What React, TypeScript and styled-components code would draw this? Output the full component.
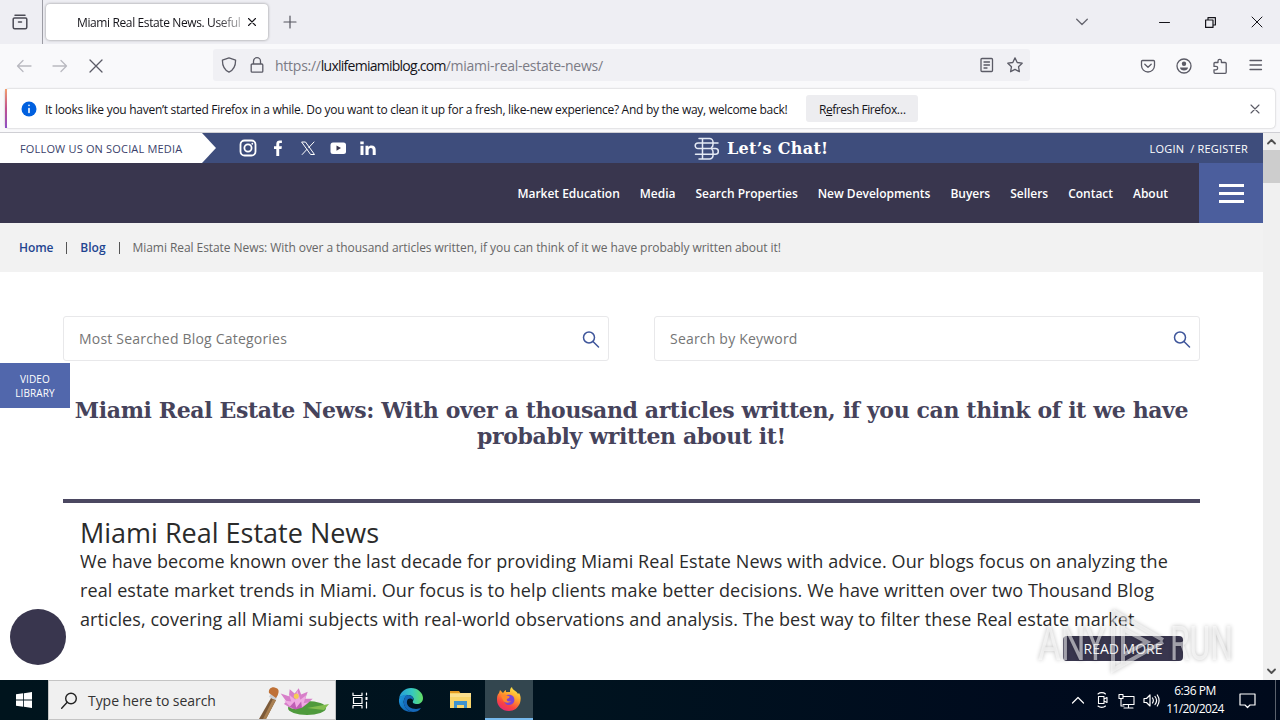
import type { ReactNode } from 'react';
import styled, { createGlobalStyle } from 'styled-components';

const GlobalStyle = createGlobalStyle`
  * {
    box-sizing: border-box;
  }

  body {
    margin: 0;
    width: 1280px;
    height: 720px;
    overflow: hidden;
    background: #fff;
    font-family: 'Open Sans', 'Noto Sans', sans-serif;
  }

  h1, h2, p {
    margin: 0;
  }

  svg {
    display: block;
    flex: none;
  }
`;

const Desktop = styled.div`
  display: flex;
  flex-direction: column;
  width: 1280px;
  height: 720px;
  overflow: hidden;
`;

const Label = styled.span<{ $size?: number; $spacing?: number; $color?: string; $weight?: number }>`
  font-size: ${({ $size }) => $size ?? 12}px;
  letter-spacing: ${({ $spacing }) => $spacing ?? 0}px;
  color: ${({ $color }) => $color ?? 'inherit'};
  font-weight: ${({ $weight }) => $weight ?? 400};
  white-space: nowrap;
`;

/* ---------- browser chrome ---------- */

const TabBar = styled.div`
  display: flex;
  align-items: center;
  height: 44px;
  flex: none;
  background: #eeeef3;
  color: #15141a;
`;

const ViewButton = styled.div`
  display: flex;
  align-items: center;
  justify-content: center;
  width: 43px;
  height: 44px;
  padding-right: 3px;
  border-right: 1px solid #9c9ca4;
`;

const Tab = styled.div`
  display: flex;
  align-items: center;
  width: 222px;
  height: 36px;
  margin-left: 3px;
  padding-left: 31px;
  border-radius: 4px;
  background: #fff;
  box-shadow: 0 0 3px rgba(0, 0, 0, 0.4);
`;

const TabTitle = styled.div`
  width: 164px;
  margin-right: 7px;
  overflow: hidden;
  line-height: 18px;
  mask-image: linear-gradient(to right, #000 84%, transparent 108%);
`;

const NewTab = styled.div`
  margin: 0 779px 0 15px;
`;

const WindowControls = styled.div`
  display: flex;
  align-items: center;
  gap: 35px;
  margin-left: 71px;
`;

const Toolbar = styled.div`
  display: flex;
  align-items: center;
  height: 43px;
  flex: none;
  padding: 0 16px;
  background: #f9f9fb;
  color: #5b5b66;
`;

const NavButtons = styled.div`
  display: flex;
  gap: 20px;
  width: 197px;
`;

const UrlBar = styled.div`
  display: flex;
  align-items: center;
  width: 817px;
  height: 32px;
  margin-top: -2px;
  padding: 0 7px 0 8px;
  gap: 12px;
  border-radius: 3px;
  background: #f0f0f4;
`;

const Url = styled.div`
  flex: 1;
  margin-left: -2px;
  color: #7b7b85;
`;

const ToolbarActions = styled.div`
  display: flex;
  gap: 20px;
  margin-left: auto;
`;

const NoticeArea = styled.div`
  height: 46px;
  flex: none;
  padding: 2px 5px 4px 5px;
  border-bottom: 1px solid #cfcfd4;
  background: #f9f9fb;
`;

const Notice = styled.div`
  display: flex;
  align-items: center;
  height: 39px;
  padding: 0 15px 0 14px;
  border-radius: 4px;
  border-left: 2px solid;
  border-image: linear-gradient(#f5a36b, #c0508f, #8a50c8) 1;
  background: #fff;
  box-shadow: 0 0 2px rgba(0, 0, 0, 0.3);
  color: #15141a;
`;

const NoticeText = styled.p`
  margin-left: 8px;
  line-height: 18px;
`;

const NoticeButton = styled.button`
  width: 112px;
  height: 27px;
  margin: 0 auto 0 19px;
  padding: 0;
  border: 0;
  border-radius: 3px;
  background: #ededf0;
  font-family: inherit;
  color: #15141a;
`;

/* ---------- site ---------- */

const Viewport = styled.div`
  display: flex;
  height: 547px;
  flex: none;
`;

const Page = styled.main`
  position: relative;
  width: 1263px;
  height: 547px;
  overflow: hidden;
  background: #fff;
`;

const TopBar = styled.div`
  display: flex;
  align-items: center;
  height: 30px;
  background: #3e4d7c;
  color: #fff;
`;

const FollowUs = styled.div`
  display: flex;
  align-items: center;
  width: 216px;
  height: 30px;
  padding-left: 20px;
  background: #fff;
  clip-path: polygon(0 0, 202px 0, 100% 50%, 202px 100%, 0 100%);
`;

const Socials = styled.div`
  display: flex;
  align-items: center;
  gap: 12px;
  margin-left: 22.5px;
`;

const Chat = styled.div`
  display: flex;
  align-items: center;
  gap: 8px;
  margin-left: 317.5px;
  font-family: 'DejaVu Serif', serif;
`;

const Account = styled.div`
  display: flex;
  gap: 6px;
  margin: 0 15px 0 auto;
`;

const Header = styled.header`
  display: flex;
  align-items: center;
  justify-content: flex-end;
  height: 60px;
  background: #39364e;
  color: #fff;
`;

const Nav = styled.nav`
  display: flex;
  gap: 20px;
  margin-right: 31px;
`;

const MenuButton = styled.div`
  display: flex;
  flex-direction: column;
  justify-content: center;
  align-items: center;
  gap: 5px;
  width: 64px;
  height: 60px;
  background: #4b5e9d;
`;

const MenuLine = styled.i`
  width: 25px;
  height: 3px;
  background: #fff;
`;

const Breadcrumb = styled.div`
  display: flex;
  align-items: center;
  height: 49px;
  padding-left: 19px;
  background: #f2f2f2;
  color: #666;
`;

const Separator = styled.i`
  width: 1px;
  height: 12px;
  margin: 0 13px;
  background: #555;
`;

const Content = styled.section`
  padding: 44px 63px 0;
`;

const Fields = styled.div`
  display: flex;
  gap: 45px;
`;

const Field = styled.div`
  display: flex;
  align-items: center;
  justify-content: space-between;
  width: 546px;
  height: 45px;
  padding: 0 8px 0 15px;
  border: 1px solid #e8e8ea;
  border-radius: 3px;
  color: #757575;
`;

const PageTitle = styled.h1`
  margin-top: 36px;
  height: 52px;
  font-family: 'DejaVu Serif', serif;
  font-size: 22px;
  font-weight: 700;
  line-height: 26px;
  letter-spacing: -0.38px;
  text-align: center;
  white-space: nowrap;
  color: #46435b;
`;

const Article = styled.article`
  margin-top: 50px;
  padding: 16px 17px 0;
  border-top: 4px solid #4b4861;
  color: #2b2b2b;
`;

const ArticleTitle = styled.h2`
  font-size: 27px;
  font-weight: 400;
  line-height: 28px;
`;

const Line = styled.span`
  display: block;
  font-size: 18px;
  line-height: 29px;
  letter-spacing: 0.09px;
  white-space: nowrap;
`;

const ReadMore = styled.button`
  display: block;
  width: 120px;
  height: 25px;
  margin: 2px 0 0 auto;
  padding: 0;
  border: 0;
  border-radius: 4px;
  background: #39364e;
  font-family: inherit;
  line-height: 25px;
  color: #fff;
`;

const VideoTag = styled.div`
  position: absolute;
  left: 0;
  top: 230px;
  width: 70px;
  height: 45px;
  padding-top: 9px;
  background: #5167ac;
  font-size: 10px;
  font-weight: 500;
  line-height: 14px;
  letter-spacing: 0.1px;
  text-align: center;
  color: #fff;
`;

const ChatBubble = styled.div`
  position: absolute;
  left: 10px;
  top: 476px;
  width: 56px;
  height: 56px;
  border-radius: 50%;
  background: #39364e;
`;

const Watermark = styled.svg`
  position: absolute;
  left: 1030px;
  top: 470px;
  filter: drop-shadow(0 0 2px rgba(0, 0, 0, 0.45));
`;

const Scrollbar = styled.div`
  display: flex;
  flex-direction: column;
  justify-content: space-between;
  align-items: center;
  width: 17px;
  padding: 5px 0;
  background: linear-gradient(#f0f0f0 17px, #cdcdcd 17px, #cdcdcd 50px, #f0f0f0 50px);
`;

/* ---------- taskbar ---------- */

const Taskbar = styled.div`
  display: flex;
  height: 40px;
  flex: none;
  background: linear-gradient(to right, #00141d, #00131f 45%, #000b1e 80%, #000a1c);
  color: #fff;
`;

const TaskItem = styled.div<{ $width: number; $active?: boolean }>`
  display: flex;
  align-items: center;
  justify-content: center;
  width: ${({ $width }) => $width}px;
  height: 40px;
  background: ${({ $active }) => ($active ? '#33464f' : 'transparent')};
  border-bottom: ${({ $active }) => ($active ? '2px solid #76b9ed' : '0')};
`;

const SearchBox = styled.div`
  display: flex;
  align-items: center;
  width: 288px;
  height: 40px;
  padding: 0 4px 0 12px;
  border: 1px solid #c4c4c4;
  background: #f0f0f0;
  color: #333;
  overflow: hidden;
`;

const SearchHint = styled.div`
  flex: 1;
  margin-left: 10px;
`;

const Tray = styled.div`
  display: flex;
  align-items: center;
  margin-left: auto;
  gap: 7.5px;
`;

const Clock = styled.div`
  display: flex;
  flex-direction: column;
  align-items: center;
  width: 62px;
  margin: 0 5px 0 -3px;
  line-height: 18px;
`;

const Peek = styled.i`
  width: 1px;
  height: 40px;
  margin: 0 4px 0 12px;
  background: #5b626d;
`;

type IconProps = { w?: number; h?: number; box?: string; stroke?: number; color?: string; children: ReactNode };

const Icon = ({ w = 16, h = w, box = `0 0 ${w} ${h}`, stroke = 1.3, color = 'currentColor', children }: IconProps) => (
  <svg
    width={w}
    height={h}
    viewBox={box}
    fill="none"
    stroke={color}
    strokeWidth={stroke}
    strokeLinecap="round"
    strokeLinejoin="round"
  >
    {children}
  </svg>
);

const Magnifier = () => (
  <Icon w={18} stroke={1.5} color="#3f569b">
    <circle cx="7" cy="7.500" r="5.500" />
    <path d="M11 11.500 16.500 17" />
  </Icon>
);

const Lotus = () => (
  <svg width="74" height="38" viewBox="0 0 74 38">
    <path d="M2 38 14 17l5 2L9 38z" fill="#7c5a39" />
    <path d="M6 38 16 18l3 1L9 38z" fill="#a98052" />
    <path d="m12 16 3-6 6 2-2 7z" fill="#c9ced3" />
    <path d="M12 12c-1-5 4-7 7-5 4 1 3 6 0 10z" fill="#bf7136" />
    <ellipse cx="50" cy="27" rx="19" ry="7" fill="#4f9a3c" />
    <path d="M50 27 72 23l-5 6z" fill="#83bd50" />
    <g transform="translate(4 2) scale(.82 .88)">
      <path d="M24 12l10 3 1-8 6 5 5-6 3 7 8-3-3 8 9 0-7 6-6 4-13 1-9-5 3-3z" fill="#d77fc9" />
      <path d="M28 20l9 1-3-8 8 6 2-11 4 11 7-5-3 9 6-1-9 6-11 1z" fill="#efabe2" />
      <path d="M35 27l6-6 2 7 6-7 1 7-8 2z" fill="#c15eb5" />
      <circle cx="43" cy="15" r="3" fill="#f5cc54" />
    </g>
  </svg>
);

const Edge = () => (
  <svg width="26" height="26" viewBox="0 0 26 26">
    <defs>
      <linearGradient id="edgeTop" x1="0" x2="1">
        <stop offset="0" stopColor="#269bd8" />
        <stop offset=".55" stopColor="#36c8c0" />
        <stop offset="1" stopColor="#63df62" />
      </linearGradient>
      <linearGradient id="edgeBody" x1="0" x2="1" y2="1">
        <stop offset="0" stopColor="#1e9be0" />
        <stop offset="1" stopColor="#0c54a8" />
      </linearGradient>
    </defs>
    <path d="M1 12C2 5 7 1 13 1c7 0 12 5 12 10 0 4-3 6-6 6-3 0-5-1-4-3 2-3-1-6-5-6-4 0-8 1-9 4z" fill="url(#edgeTop)" />
    <path d="M1 12c1-3 5-5 9-4-3 1-5 5-4 9 1 4 5 8 9 8C7 26 0 20 1 12z" fill="url(#edgeBody)" />
    <path d="M9 14c-1 5 4 8 9 8 2 0 4-1 5-1-2 3-5 4-8 4-6-1-10-6-9-11 0-3 2-6 4-6 4 0 6 3 5 5-2-2-5-2-6 1z" fill="#1568b9" />
  </svg>
);

const Explorer = () => (
  <svg width="24" height="22" viewBox="0 0 24 22">
    <path d="M1 2h9l2 3H1z" fill="#e39a23" />
    <path d="M1 4h21v15H1z" fill="#f9d56a" />
    <path d="M1 5h9l2-1h10v4H1z" fill="#fbe08e" />
    <path d="M5 19v-7h13v7h-3v-3H8v3z" fill="#3f93cf" />
  </svg>
);

const Firefox = () => (
  <svg width="26" height="26" viewBox="0 0 26 26">
    <defs>
      <linearGradient id="fox" x1=".8" y1="0" x2=".3" y2="1">
        <stop offset="0" stopColor="#fff04b" />
        <stop offset=".4" stopColor="#ffa12b" />
        <stop offset=".75" stopColor="#fa4441" />
        <stop offset="1" stopColor="#e62977" />
      </linearGradient>
    </defs>
    <path
      d="M3 7l1-3 3 3c1-1 1-2 3-3l0 2 4 0c0-2 0-4 2-5 0 3 5 4 6 7l1-1c2 3 2 6 1 10-2 5-6 8-11 8C6 25 1 20 1 14c0-3 0-5 2-7z"
      fill="url(#fox)"
    />
    <path d="M8 13c0-4 4-5 7-4 3 1 4 4 3 7-1 2-3 3-5 3-3 0-5-2-5-6z" fill="#7c44d4" />
    <path d="M5 10c2-2 5-1 7 0 2 0 2 1 1 2l-2 1c-1 2 2 3 4 2-2 3-7 2-8-1z" fill="#ff8a2a" />
  </svg>
);

const navItems = [
  'Market Education',
  'Media',
  'Search Properties',
  'New Developments',
  'Buyers',
  'Sellers',
  'Contact',
  'About',
];

const BrowserChrome = () => (
  <>
    <TabBar>
      <ViewButton>
        <Icon w={16} color="#4b4b55" stroke={1.5}>
          <path d="M3 1.2h10M2.5 4h11a1.3 1.3 0 0 1 1.3 1.3v8a1.5 1.5 0 0 1-1.5 1.5H2.7a1.5 1.5 0 0 1-1.5-1.5v-8A1.3 1.3 0 0 1 2.5 4zM6.5 8h3" />
        </Icon>
      </ViewButton>
      <Tab>
        <TabTitle>
          <Label $spacing={-0.38}>Miami Real Estate News. Useful</Label>
        </TabTitle>
        <Icon w={8} stroke={1.1}>
          <path d="M.5.5l7 7M7.500.5l-7 7" />
        </Icon>
      </Tab>
      <NewTab>
        <Icon w={14} color="#55555f" stroke={1.2}>
          <path d="M7 1v12M1 7h12" />
        </Icon>
      </NewTab>
      <Icon w={12} h={8} color="#66666f">
        <path d="M.7 1.200 6 6.500l5.300-5.300" />
      </Icon>
      <WindowControls>
        <Icon w={11} stroke={1}>
          <path d="M.5 5.500h10" />
        </Icon>
        <Icon w={11} stroke={1.200}>
          <path d="M.6 3h7.400v7.400H.6zM3 3V.6h7.400V8H8" />
        </Icon>
        <Icon w={12} stroke={1}>
          <path d="M1 1l10 10M11 1 1 11" />
        </Icon>
      </WindowControls>
    </TabBar>
    <Toolbar>
      <NavButtons>
        <Icon w={16} color="#b9b9c0">
          <path d="M15 8H1.500M7 2.500 1.500 8 7 13.500" />
        </Icon>
        <Icon w={16} color="#b9b9c0">
          <path d="M1 8h13.500M9 2.500 14.500 8 9 13.500" />
        </Icon>
        <Icon w={16} color="#5b5b66">
          <path d="M2 2l12 12M14 2 2 14" />
        </Icon>
      </NavButtons>
      <UrlBar>
        <Icon w={16}>
          <path d="M8 .9l6.600 2.300c0 5-1.600 9.600-6.600 11.900C3 12.800 1.400 8.200 1.400 3.200z" />
        </Icon>
        <Icon w={16}>
          <path d="M3.200 7h9.600a1 1 0 0 1 1 1v6.200a1 1 0 0 1-1 1H3.200a1 1 0 0 1-1-1V8a1 1 0 0 1 1-1zM4.500 7V4.200a3.500 3.500 0 0 1 7 0V7" />
        </Icon>
        <Url>
          <Label $size={14} $spacing={-0.25}>https://</Label>
          <Label $size={14} $spacing={-0.74} $color="#15141a">luxlifemiamiblog.com</Label>
          <Label $size={14} $spacing={-0.27}>/miami-real-estate-news/</Label>
        </Url>
        <Icon w={16}>
          <path d="M3 1.500h9.500a1 1 0 0 1 1 1v11a1 1 0 0 1-1 1H3a1 1 0 0 1-1-1v-11a1 1 0 0 1 1-1zM5 5h5.500M5 8h5.500M5 11h3" />
        </Icon>
        <Icon w={16}>
          <path d="M8 .9l2.200 4.600 5 .7-3.700 3.500.9 5L8 12.400l-4.400 2.300.9-5L.8 6.200l5-.7z" />
        </Icon>
      </UrlBar>
      <ToolbarActions>
        <Icon w={16}>
          <path d="M2.500 2.500h11a1 1 0 0 1 1 1V7.500a6.500 6.500 0 0 1-13 0v-4a1 1 0 0 1 1-1zM4.800 6.200 8 9.300l3.200-3.100" />
        </Icon>
        <Icon w={16}>
          <circle cx="8" cy="8" r="7" />
          <circle cx="8" cy="5.800" r="2.200" fill="currentColor" stroke="none" />
          <path d="M4 9.500h8c0 2-2 3-4 3s-4-1-4-3z" fill="currentColor" stroke="none" />
        </Icon>
        <Icon w={16}>
          <path d="M2 5.500a1 1 0 0 1 1-1h3V3a1.700 1.700 0 0 1 3.400 0v1.500h3.800a1 1 0 0 1 1 1v8.800a1 1 0 0 1-1 1H3a1 1 0 0 1-1-1v-2.500h2a1.600 1.600 0 0 0 0-3.400H2z" />
        </Icon>
        <Icon w={16}>
          <path d="M2 2.500h11.500M2 7h11.500M2 11.500h11.500" />
        </Icon>
      </ToolbarActions>
    </Toolbar>
    <NoticeArea>
      <Notice>
        <Icon w={16} stroke={2}>
          <circle cx="8" cy="8" r="7.500" fill="#0060df" stroke="none" />
          <path d="M8 7.500v4M8 4.400v.1" stroke="#fff" strokeWidth="1.600" />
        </Icon>
        <NoticeText>
          <Label $spacing={-0.28}>
            It looks like you haven’t started Firefox in a while. Do you want to clean it up for a fresh, like-new experience? And by the way, welcome back!
          </Label>
        </NoticeText>
        <NoticeButton>
          <Label $spacing={-0.45}>R<u>e</u>fresh Firefox…</Label>
        </NoticeButton>
        <Icon w={10} stroke={1.100} color="#5b5b66">
          <path d="M1 1l8 8M9 1 1 9" />
        </Icon>
      </Notice>
    </NoticeArea>
  </>
);

const Site = () => (
  <Page>
    <TopBar>
      <FollowUs>
        <Label $size={11} $spacing={0.17} $color="#3a3f6b">FOLLOW US ON SOCIAL MEDIA</Label>
      </FollowUs>
      <Socials>
        <Icon w={18} stroke={1.800}>
          <rect x="1.500" y="1.500" width="15" height="15" rx="4" />
          <circle cx="9" cy="9" r="3.600" />
          <path d="M13.300 4.700v.1" />
        </Icon>
        <Icon w={18} stroke={0}>
          <path d="M7.300 17V10H5V7.200h2.300V5c0-2.500 1.400-3.600 3.500-3.600h2.100v2.700h-1.500c-1 0-1.200.5-1.200 1.300v1.800h2.700L12.500 10h-2.300v7z" fill="#fff" />
        </Icon>
        <Icon w={18} stroke={1}>
          <path d="M3 3h3.500L15.500 15.500H12zM15 3l-5.200 5.500M8 10.300 3.200 15.500" />
        </Icon>
        <Icon w={18} stroke={0}>
          <rect x="1.500" y="3.500" width="15.500" height="11.500" rx="2.500" fill="#fff" />
          <path d="M7.500 6.500v5.200l4.500-2.600z" fill="#39364e" />
        </Icon>
        <Icon w={18} stroke={0}>
          <path d="M1.500 6.800h3V16h-3zM1.300 2.500h3.400v2.700H1.300zM6.500 6.800h2.900v1.300c.6-1 1.600-1.600 3-1.600 3 0 4.300 1.600 4.300 4.500v5h-3v-4.600c0-1.500-.6-2.300-1.900-2.300-1.400 0-2.200.9-2.200 2.400V16H6.500z" fill="#fff" />
        </Icon>
      </Socials>
      <Chat>
        <Icon w={25} h={23} stroke={1.500} color="#e4eaf5">
          <path d="M5 1.500h10.500a3.500 3.500 0 0 1 3.500 3.500v2.500a3.500 3.500 0 0 1-1.500 3M5 22h10.500a3.500 3.500 0 0 0 3.500-3.500V15a3 3 0 0 0-1-2.500M8.500 1.500V22" />
          <path d="M24 6H4a2.700 2.700 0 0 0 0 5.600h17.500a2.700 2.700 0 0 1 0 5.600H1.500" />
        </Icon>
        <Label $size={16} $weight={700} $spacing={0.3}>Let’s Chat!</Label>
      </Chat>
      <Account>
        <Label $size={11} $weight={500} $spacing={0.2}>LOGIN</Label>
        <Label $size={11} $weight={500} $spacing={0.2}>/ REGISTER</Label>
      </Account>
    </TopBar>
    <Header>
      <Nav>
        {navItems.map((item) => (
          <Label key={item} $weight={600} $size={12} $spacing={-0.02}>
            {item}
          </Label>
        ))}
      </Nav>
      <MenuButton>
        <MenuLine />
        <MenuLine />
        <MenuLine />
      </MenuButton>
    </Header>
    <Breadcrumb>
      <Label $weight={600} $spacing={-0.1} $color="#1f4590">Home</Label>
      <Separator />
      <Label $weight={600} $color="#1f4590">Blog</Label>
      <Separator />
      <Label $spacing={-0.065}>Miami Real Estate News: With over a thousand articles written, if you can think of it we have probably written about it!</Label>
    </Breadcrumb>
    <Content>
      <Fields>
        <Field>
          <Label $size={14} $spacing={0.2}>Most Searched Blog Categories</Label>
          <Magnifier />
        </Field>
        <Field>
          <Label $size={14} $spacing={0.2}>Search by Keyword</Label>
          <Magnifier />
        </Field>
      </Fields>
      <PageTitle>
        Miami Real Estate News: With over a thousand articles written, if you can think of it we have
        <br />
        probably written about it!
      </PageTitle>
      <Article>
        <ArticleTitle>Miami Real Estate News</ArticleTitle>
        <p>
          <Line>We have become known over the last decade for providing Miami Real Estate News with advice. Our blogs focus on analyzing the</Line>
          <Line>real estate market trends in Miami. Our focus is to help clients make better decisions. We have written over two Thousand Blog</Line>
          <Line>articles, covering all Miami subjects with real-world observations and analysis. The best way to filter these Real estate market</Line>
        </p>
        <ReadMore>
          <Label $size={14}>READ MORE</Label>
        </ReadMore>
      </Article>
    </Content>
    <VideoTag>
      VIDEO
      <br />
      LIBRARY
    </VideoTag>
    <ChatBubble />
    <Watermark width="215" height="76" viewBox="0 0 215 76">
      <g fill="#fff" fillOpacity=".55" fontFamily="Roboto, sans-serif" fontSize="48" fontWeight="400">
        <text x="8" y="57" textLength="68" lengthAdjust="spacingAndGlyphs">ANY</text>
        <text x="140" y="57" textLength="63" lengthAdjust="spacingAndGlyphs">RUN</text>
      </g>
      <path
        d="M83 8v59l50-28M83 8l50 29M93 26v26l24-13zM93 26V15M93 52v9"
        fill="none"
        stroke="#fff"
        strokeOpacity=".5"
        strokeWidth="4"
      />
    </Watermark>
  </Page>
);

const WindowsTaskbar = () => (
  <Taskbar>
    <TaskItem $width={48}>
      <svg width="16" height="16" viewBox="0 0 16 16" fill="#fff">
        <path d="M0 2.300 7.200 1.300v6.300H0zM8 1.200 16 0v7.600H8zM0 8.400h7.200v6.300L0 13.700zM8 8.400h8V16l-8-1.200z" />
      </svg>
    </TaskItem>
    <SearchBox>
      <Icon w={17} stroke={1.400} color="#222">
        <circle cx="10" cy="6.500" r="5.300" />
        <path d="M6.200 10.300.7 16.200" />
      </Icon>
      <SearchHint>
        <Label $size={14} $spacing={-0.05}>Type here to search</Label>
      </SearchHint>
      <Lotus />
    </SearchBox>
    <TaskItem $width={49}>
      <Icon w={17} stroke={1.200}>
        <path d="M1 1v2.500h9V1M1 16v-2.500h9V16M1.500 5.500h8.500v6H1.500zM14.500 1v2M14.500 10v6" />
        <path d="M13.500 5h2v3h-2z" fill="#fff" stroke="none" />
      </Icon>
    </TaskItem>
    <TaskItem $width={52}>
      <Edge />
    </TaskItem>
    <TaskItem $width={48}>
      <Explorer />
    </TaskItem>
    <TaskItem $width={48} $active>
      <Firefox />
    </TaskItem>
    <Tray>
      <Icon w={14} h={12} stroke={1.200}>
        <path d="M1.500 9 7 3.500 12.500 9" />
      </Icon>
      <Icon w={18} stroke={1.100}>
        <path d="M5.500 5.500h5.500v7H5.500zM11 8l3-1.500v5L11 10M5 3c2-1.800 5.500-1.800 7.500 0M5 15c2 1.800 5.500 1.800 7.500 0" />
      </Icon>
      <Icon w={17} stroke={1.100}>
        <path d="M5 4.500h11v8H5M10.500 12.500V16M6 16h9M1 2.500h4v4H1zM3 6.500V14h3" />
      </Icon>
      <Icon w={17} stroke={1.200}>
        <path d="M1 6.500h2.500L7 3v11L3.500 10.500H1zM9.500 6c1 1.500 1 3.500 0 5M12 4.500c2 2.500 2 5.500 0 8M14.300 3c2.300 3.500 2.300 7.500 0 11" />
      </Icon>
      <Clock>
        <Label $spacing={-0.45}>6:36 PM</Label>
        <Label $spacing={-0.6}>11/20/2024</Label>
      </Clock>
      <Icon w={17} stroke={1.200}>
        <path d="M1 2h15v11H11L8.500 15.500 6 13H1z" />
      </Icon>
      <Peek />
    </Tray>
  </Taskbar>
);

export default function App() {
  return (
    <Desktop>
      <GlobalStyle />
      <BrowserChrome />
      <Viewport>
        <Site />
        <Scrollbar>
          <Icon w={9} h={7} stroke={1.800} color="#505050">
            <path d="M1 5.500 4.500 2 8 5.500" />
          </Icon>
          <Icon w={9} h={7} stroke={1.800} color="#505050">
            <path d="M1 1.500 4.500 5 8 1.500" />
          </Icon>
        </Scrollbar>
      </Viewport>
      <WindowsTaskbar />
    </Desktop>
  );
}
